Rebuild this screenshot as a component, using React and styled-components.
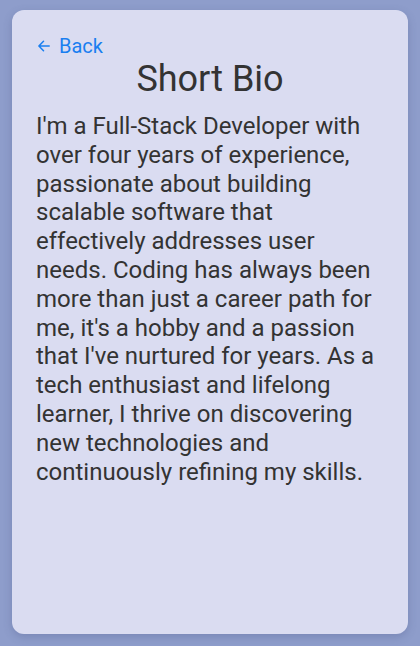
import React from "react";
import styled, { createGlobalStyle } from "styled-components";

const Global = createGlobalStyle`
  html, body { margin: 0; padding: 0; }
  body {
    background: #8e9dcb;
    font-family: Roboto, "Liberation Sans", sans-serif;
  }
`;

const Page = styled.div`
  padding: 10px 12px 12px;
`;

const Card = styled.section`
  box-sizing: border-box;
  height: 624px;
  background: #dadcf1;
  border-radius: 12px;
  box-shadow: 0 3px 8px rgba(60, 70, 120, 0.25);
  padding: 24px 24px;
  display: flex;
  flex-direction: column;
`;

const BackLink = styled.a`
  align-self: flex-start;
  color: #1a7ff0;
  font-size: 20px;
  text-decoration: none;
  cursor: pointer;
  display: flex;
  align-items: center;
  gap: 9px;
  margin-left: 2px;
`;

const Title = styled.h1`
  margin: 0;
  text-align: center;
  font-size: 36px;
  font-weight: 400;
  color: #333;
`;

const Bio = styled.p`
  margin: 12px 0 0;
  font-size: 24px;
  line-height: 1.2;
  color: #333;
`;

export default function App() {
  return (
    <>
      <Global />
      <Page>
        <Card>
          <BackLink>
            <svg width="12" height="12" viewBox="0 0 12 12" fill="none" stroke="currentColor" strokeWidth="1.5" strokeLinecap="round" strokeLinejoin="round">
              <path d="M11.2 6H1M5.5 1.3L0.9 6l4.6 4.7" />
            </svg>
            Back
          </BackLink>
          <Title>Short Bio</Title>
          <Bio>
            I'm a Full-Stack Developer with over four years of experience, passionate about building scalable software that effectively addresses user needs. Coding has always been more than just a career path for me, it's a hobby and a passion that I've nurtured for years. As a tech enthusiast and lifelong learner, I thrive on discovering new technologies and continuously refining my skills.
          </Bio>
        </Card>
      </Page>
    </>
  );
}
